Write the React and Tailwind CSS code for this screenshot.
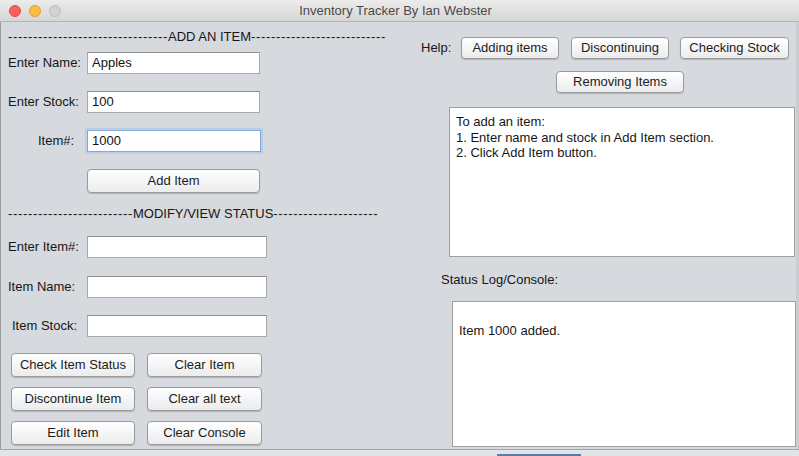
const Btn = ({ children, className = '' }) => (
    <button
        className={`rounded-[4px] border border-[#9b9b9b] bg-gradient-to-b from-white to-[#ececec] text-[13px] text-[#1c1c1c] shadow-[0_1px_1px_rgba(0,0,0,0.18)] ${className}`}
    >
        {children}
    </button>
);

const Field = ({ value = '', width, focused = false }) => (
    <div
        className={`h-[22px] bg-white flex items-center pl-[4px] text-[13px] text-[#111] ${width} ${
            focused
                ? 'border border-[#86a9d4] shadow-[0_0_0_2px_#b9cfe9]'
                : 'border border-[#a9a9a9] border-t-[#8e8e8e]'
        }`}
    >
        {value}
    </div>
);

const Row = ({ label, labelClass = '', children, className = '' }) => (
    <div className={`flex items-center ${className}`}>
        <div className={`w-[79px] ${labelClass}`}>{label}</div>
        {children}
    </div>
);

const Dashes = ({ before, title, after }) => (
    <div className="h-[14px] leading-[14px] whitespace-nowrap">
        <span className="tracking-[0.67px]">{'-'.repeat(before)}</span>
        <span>{title}</span>
        <span className="tracking-[0.67px]">{'-'.repeat(after)}</span>
    </div>
);

export default function App() {
    return (
        <div className="w-[799px] h-[456px] overflow-hidden bg-[#d6d9dd] font-['Liberation_Sans',Arial,sans-serif] text-[13px] text-[#161616]">
            {/* title bar */}
            <div className="relative h-[22px] bg-gradient-to-b from-[#ececec] to-[#d6d6d6] border-b border-[#b4b4b4] flex items-center">
                <div className="flex gap-[8px] pl-[9px]">
                    <span className="w-[12px] h-[12px] rounded-full bg-[#fc605c] border border-[#e14942]" />
                    <span className="w-[12px] h-[12px] rounded-full bg-[#fdbc40] border border-[#dea034]" />
                    <span className="w-[12px] h-[12px] rounded-full bg-[#d2d2d2] border border-[#bdbdbd]" />
                </div>
                <div className="flex-1 text-center text-[13px] text-[#4a4a4a] pr-[69px]">
                    Inventory Tracker By Ian Webster
                </div>
            </div>

            <div className="flex h-[427px] border-l border-[#9c9c9c] border-r-[3px] border-r-[#c9ccd0]">
                {/* left side */}
                <div className="w-[409px] pl-[7px] pt-[8px] flex flex-col">
                    <Dashes before={32} title="ADD AN ITEM" after={27} />
                    <Row label="Enter Name:" className="mt-[8px]">
                        <Field value="Apples" width="w-[173px]" />
                    </Row>
                    <Row label="Enter Stock:" className="mt-[17px]">
                        <Field value="100" width="w-[173px]" />
                    </Row>
                    <Row label="Item#:" labelClass="pl-[30px]" className="mt-[17px]">
                        <Field value="1000" width="w-[174px]" focused />
                    </Row>
                    <Btn className="mt-[17px] ml-[79px] w-[173px] h-[24px]">Add Item</Btn>
                    <div className="mt-[14px]">
                        <Dashes before={25} title="MODIFY/VIEW STATUS" after={21} />
                    </div>
                    <Row label="Enter Item#:" className="mt-[15px]">
                        <Field width="w-[180px]" />
                    </Row>
                    <Row label="Item Name:" className="mt-[18px]">
                        <Field width="w-[180px]" />
                    </Row>
                    <Row label="Item Stock:" labelClass="pl-[4px]" className="mt-[17px]">
                        <Field width="w-[180px]" />
                    </Row>
                    <div className="mt-[16px] ml-[3px] grid grid-cols-[124px_115px] gap-x-[12px] gap-y-[10px]">
                        <Btn className="h-[24px]">Check Item Status</Btn>
                        <Btn className="h-[24px]">Clear Item</Btn>
                        <Btn className="h-[24px]">Discontinue Item</Btn>
                        <Btn className="h-[24px]">Clear all text</Btn>
                        <Btn className="h-[24px]">Edit Item</Btn>
                        <Btn className="h-[24px]">Clear Console</Btn>
                    </div>
                </div>

                {/* right side */}
                <div className="flex-1 pt-[15px] flex flex-col">
                    <div className="flex items-center pl-[11px] h-[22px]">
                        <span className="w-[40px]">Help:</span>
                        <Btn className="w-[98px] h-[22px]">Adding items</Btn>
                        <Btn className="w-[98px] h-[22px] ml-[12px]">Discontinuing</Btn>
                        <Btn className="w-[109px] h-[22px] ml-[11px]">Checking Stock</Btn>
                    </div>
                    <Btn className="mt-[12px] ml-[146px] w-[128px] h-[22px]">Removing Items</Btn>
                    <div className="mt-[14px] ml-[39px] w-[346px] h-[150px] bg-white border border-[#9f9f9f] pl-[6px] pt-[6px] leading-[15.5px]">
                        <div>To add an item:</div>
                        <div>1. Enter name and stock in Add Item section.</div>
                        <div>2. Click Add Item button.</div>
                    </div>
                    <div className="mt-[16px] ml-[31px] h-[14px] leading-[14px]">Status Log/Console:</div>
                    <div className="mt-[14px] ml-[42px] w-[344px] h-[146px] bg-white border border-[#9f9f9f] pl-[6px] pt-[5px] leading-[16px]">
                        <div className="h-[16px]" />
                        <div>Item 1000 added.</div>
                    </div>
                </div>
            </div>

            {/* bottom edge */}
            <div className="h-[7px] bg-[#e3e4e6] border-t border-[#a5a5a5] flex items-end">
                <div className="ml-[497px] w-[84px] h-[2px] bg-[#5b7aa6]" />
            </div>
        </div>
    );
}
